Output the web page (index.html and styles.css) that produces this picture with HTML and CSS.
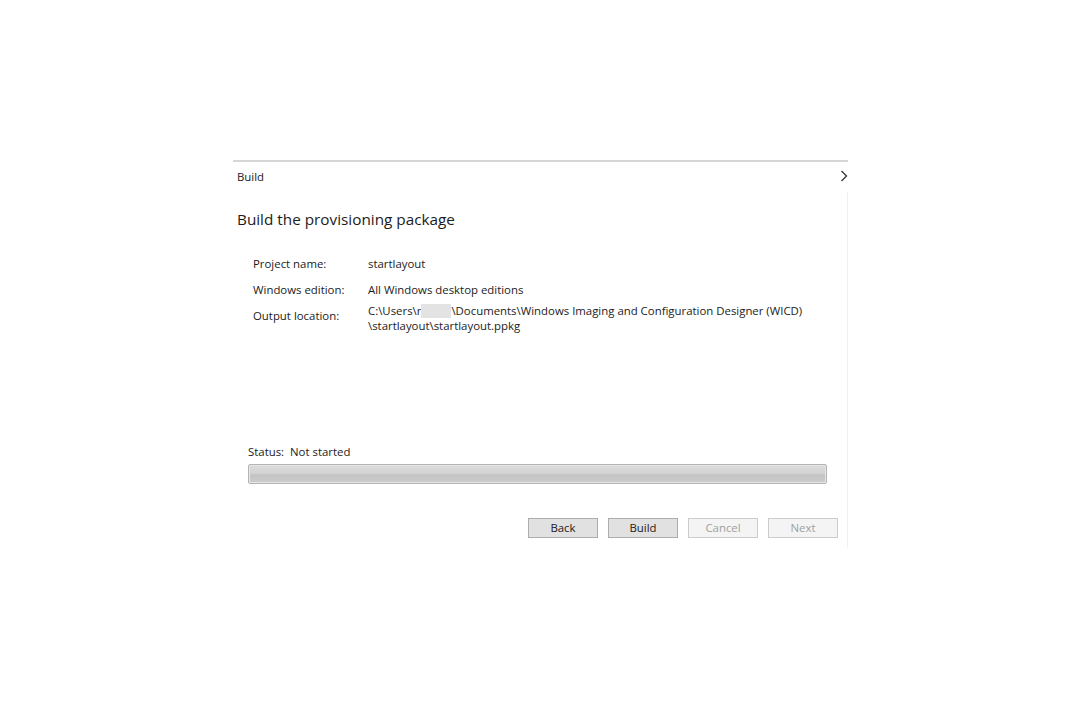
FILE: index.html
```html
<!DOCTYPE html>
<html>
<head>
<meta charset="utf-8">
<link rel="stylesheet" href="styles.css">
</head>
<body>
<div class="panel">
  <div class="topline"></div>
  <div class="header">
    <span class="crumb">Build</span>
    <svg class="chev" width="8" height="12" viewBox="0 0 8 12"><path d="M1.5 1 L6.5 6 L1.5 11" fill="none" stroke="#333" stroke-width="1.3"/></svg>
  </div>
  <div class="content">
    <h1 class="title">Build the provisioning package</h1>
    <div class="info">
      <div class="row r1"><span class="label">Project name:</span><span class="value">startlayout</span></div>
      <div class="row r2"><span class="label">Windows edition:</span><span class="value">All Windows desktop editions</span></div>
      <div class="row r3"><span class="label lab3">Output location:</span><span class="value">C:\Users\r<span class="redact"></span>\Documents\Windows Imaging and Configuration Designer (WICD)<br>\startlayout\startlayout.ppkg</span></div>
    </div>
    <div class="status">Status:&nbsp; Not started</div>
    <div class="progress"><div class="bar"></div></div>
    <div class="buttons">
      <button class="btn">Back</button>
      <button class="btn">Build</button>
      <button class="btn disabled">Cancel</button>
      <button class="btn disabled">Next</button>
    </div>
  </div>
</div>
</body>
</html>
```
FILE: styles.css
```css
html, body {
  margin: 0;
  padding: 0;
  background: #fff;
}
body {
  font-family: "Open Sans", "Noto Sans", sans-serif;
  color: #1b1b1b;
  font-size: 11.4px;
}
.panel {
  margin-left: 233px;
  padding-top: 160px;
  width: 615px;
}
.topline {
  height: 2px;
  background: #d6d6d6;
}
.header {
  height: 30px;
  display: flex;
  align-items: center;
  justify-content: space-between;
  padding-left: 4px;
  box-sizing: border-box;
}
.crumb {
  line-height: 15px;
  margin-top: -1px;
}
.chev {
  margin-top: -2px;
}
.content {
  border-right: 1px solid #f0f0f0;
  padding-bottom: 10px;
}
.title {
  margin: 0;
  padding: 16px 0 0 4px;
  font-size: 15.3px;
  font-weight: normal;
  line-height: 22px;
  color: #1b1b1b;
}
.info {
  padding-left: 20px;
  margin-top: 26px;
}
.row {
  display: flex;
  line-height: 15px;
}
.r2 { margin-top: 11px; }
.r3 { margin-top: 6px; }
.label {
  width: 115px;
  flex: none;
}
.lab3 { padding-top: 5px; }
.redact {
  display: inline-block;
  width: 30px;
  height: 14px;
  background: #e3e3e3;
  vertical-align: -3px;
  margin-left: 0;
}
.status {
  margin-top: 111px;
  padding-left: 15px;
  line-height: 15px;
}
.progress {
  margin: 5px 0 0 15px;
  width: 579px;
  height: 20px;
  box-sizing: border-box;
  border: 1px solid #b4b4b4;
  border-radius: 2px;
  background: #e6e6e6;
  padding: 1px;
}
.bar {
  height: 100%;
  background: linear-gradient(#dadada 0%, #d4d4d4 45%, #c4c4c4 55%, #cbcbcb 100%);
}
.buttons {
  display: flex;
  justify-content: flex-end;
  gap: 10px;
  margin-top: 34px;
  padding-right: 9px;
}
.btn {
  width: 70px;
  height: 20px;
  box-sizing: border-box;
  border: 1px solid #adadad;
  background: #e1e1e1;
  font-family: "Open Sans", "Noto Sans", sans-serif;
  font-size: 11.4px;
  color: #1b1b1b;
  padding: 0;
  line-height: 16px;
}
.btn.disabled {
  border-color: #cccccc;
  background: #f4f4f4;
  color: #a0a0a0;
}
```
